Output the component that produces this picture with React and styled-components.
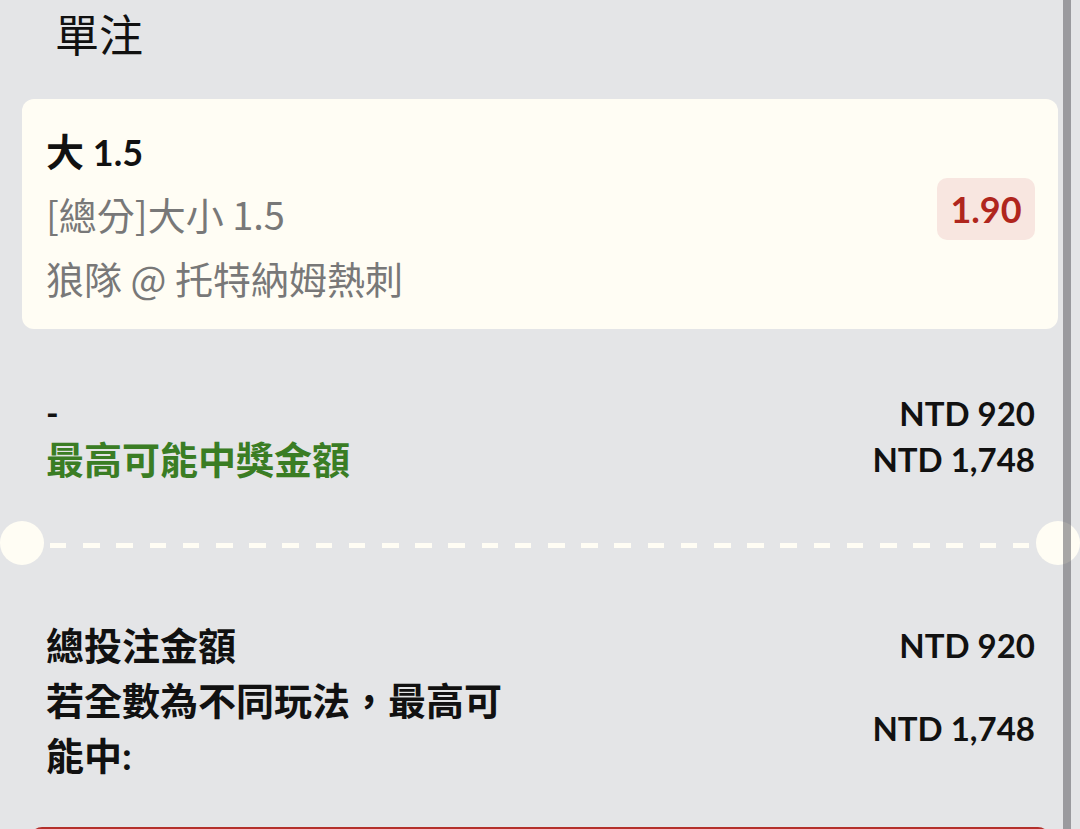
import React from "react";
import styled, { createGlobalStyle } from "styled-components";

const GlobalStyle = createGlobalStyle`
  html, body {
    margin: 0;
    padding: 0;
    background: #e4e5e7;
  }
  * { box-sizing: border-box; }
`;

const LATIN = `"Lato", "Noto Sans CJK TC", "Noto Sans", sans-serif`;
const CJK = `"Noto Sans CJK TC", "Noto Sans", sans-serif`;

const Page = styled.div`
  position: relative;
  width: 1080px;
  height: 829px;
  overflow: hidden;
  background: #e4e5e7;
  padding: 0 22px;
  font-family: ${LATIN};
  color: #111;
`;

const Header = styled.div`
  height: 66px;
  display: flex;
  align-items: center;
  padding-left: 33px;
  margin-bottom: 33px;
  font-family: ${CJK};
  font-size: 44px;
  font-weight: 400;
  color: #111;
`;

const Card = styled.div`
  height: 230px;
  background: #fffdf4;
  border-radius: 12px;
  padding: 0 23px 0 24px;
  display: flex;
  justify-content: space-between;
  align-items: center;
`;

const Info = styled.div`
  align-self: stretch;
  padding-top: 19px;
  display: flex;
  flex-direction: column;
`;

const Title = styled.div`
  height: 64px;
  line-height: 64px;
  font-family: ${LATIN};
  font-size: 36px;
  font-weight: 700;
  color: #111;
  white-space: nowrap;
`;

const Detail = styled.div`
  height: 64px;
  line-height: 64px;
  font-family: ${CJK};
  font-size: 38px;
  font-weight: 400;
  color: #787878;
  white-space: nowrap;
`;

const Han = styled.span`
  font-family: ${CJK};
  font-size: 38px;
`;

const Odds = styled.div`
  width: 98px;
  height: 62px;
  margin-bottom: 10px;
  border-radius: 10px;
  background: #f8e6e0;
  color: #b0261d;
  font-size: 36px;
  font-weight: 700;
  display: flex;
  align-items: center;
  justify-content: center;
`;

const Section = styled.div`
  margin-top: ${(p) => p.$top}px;
  padding: 0 23px 0 24px;
  display: flex;
  flex-direction: column;
`;

const Row = styled.div`
  display: flex;
  justify-content: space-between;
  align-items: center;
  line-height: ${(p) => p.$lh}px;
`;

const Label = styled.div`
  max-width: 470px;
  font-family: ${LATIN};
  font-size: 38px;
  font-weight: 700;
  color: ${(p) => (p.$tone === "green" ? "#3a7d24" : "#111")};
`;

const Dash = styled.div`
  font-size: 34px;
  font-weight: 700;
  color: #111;
`;

const Amount = styled.div`
  font-size: 33px;
  font-weight: 700;
  color: #111;
  white-space: nowrap;
`;

const Divider = styled.div`
  margin: 39px -22px 0;
  height: 44px;
  display: flex;
  align-items: center;
`;

const Dot = styled.div`
  width: 44px;
  height: 44px;
  border-radius: 50%;
  background: #fffdf4;
  flex: none;
`;

const DashLine = styled.div`
  flex: 1;
  height: 5px;
  margin: 4px 6px 0;
  background: repeating-linear-gradient(
    to right,
    #fffdf4 0,
    #fffdf4 16.5px,
    transparent 16.5px,
    transparent 33.2px
  );
`;

const SubmitButton = styled.div`
  margin: 44px 8px 0;
  height: 120px;
  border-radius: 12px;
  background: #b3302b;
`;

const Scrollbar = styled.div`
  position: absolute;
  top: 0;
  bottom: 0;
  right: 9px;
  width: 8px;
  background: rgba(80, 80, 86, 0.5);
`;

export default function App() {
  return (
    <>
      <GlobalStyle />
      <Page>
        <Header>單注</Header>

        <Card>
          <Info>
            <Title>
              <Han>大</Han> 1.5
            </Title>
            <Detail>[總分]大小 1.5</Detail>
            <Detail>狼隊 @ 托特納姆熱刺</Detail>
          </Info>
          <Odds>1.90</Odds>
        </Card>

        <Section $top={61}>
          <Row $lh={46}>
            <Dash>-</Dash>
            <Amount>NTD 920</Amount>
          </Row>
          <Row $lh={46}>
            <Label $tone="green">最高可能中獎金額</Label>
            <Amount>NTD 1,748</Amount>
          </Row>
        </Section>

        <Divider>
          <Dot />
          <DashLine />
          <Dot />
        </Divider>

        <Section $top={53}>
          <Row $lh={55}>
            <Label>總投注金額</Label>
            <Amount>NTD 920</Amount>
          </Row>
          <Row $lh={55}>
            <Label>若全數為不同玩法，最高可能中:</Label>
            <Amount>NTD 1,748</Amount>
          </Row>
        </Section>

        <SubmitButton />
        <Scrollbar />
      </Page>
    </>
  );
}
